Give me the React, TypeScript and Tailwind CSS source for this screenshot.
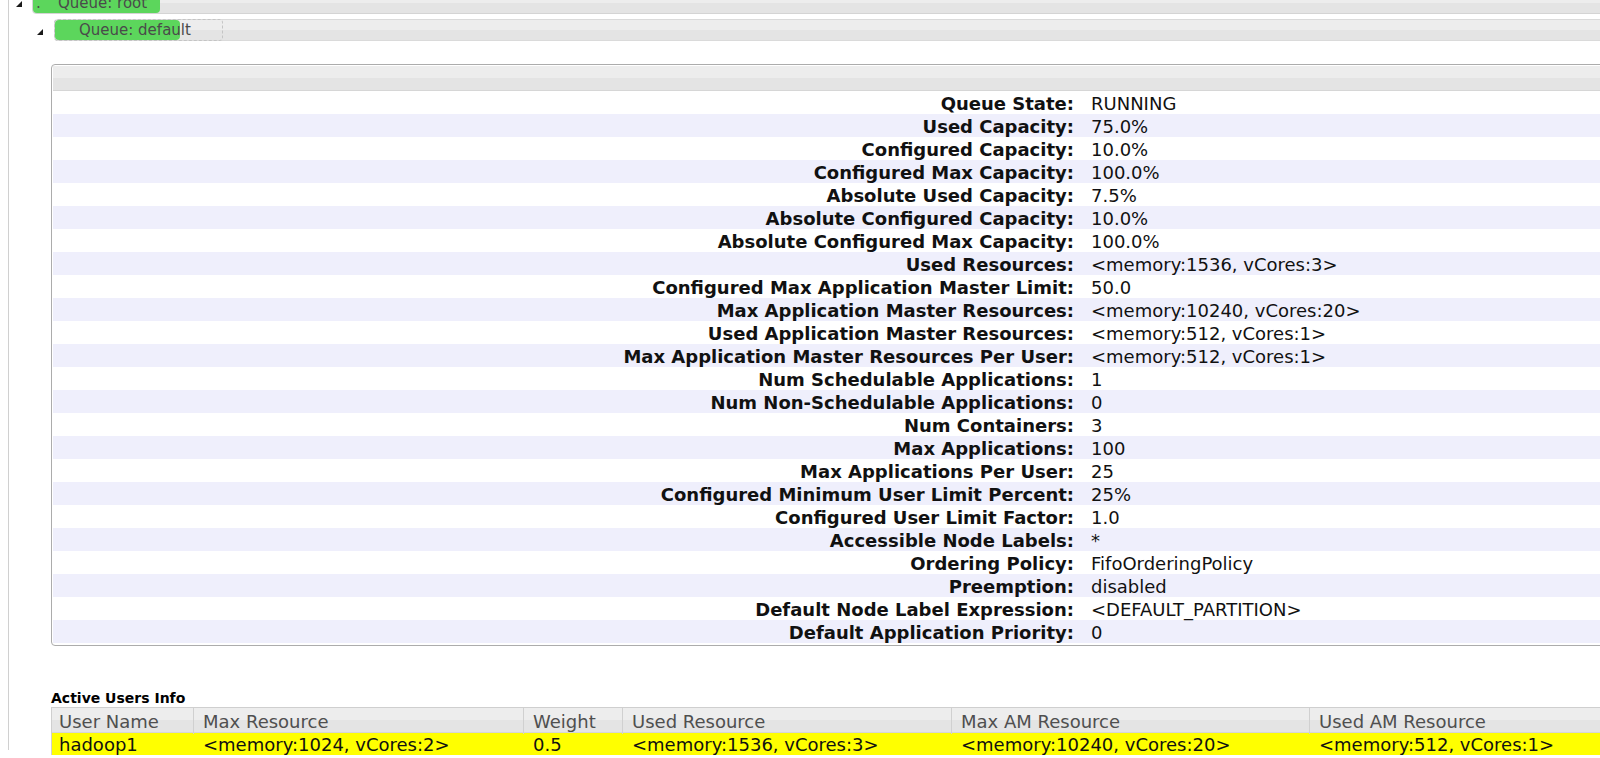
const queueInfo: [string, string][] = [
  ['Queue State:', 'RUNNING'],
  ['Used Capacity:', '75.0%'],
  ['Configured Capacity:', '10.0%'],
  ['Configured Max Capacity:', '100.0%'],
  ['Absolute Used Capacity:', '7.5%'],
  ['Absolute Configured Capacity:', '10.0%'],
  ['Absolute Configured Max Capacity:', '100.0%'],
  ['Used Resources:', '<memory:1536, vCores:3>'],
  ['Configured Max Application Master Limit:', '50.0'],
  ['Max Application Master Resources:', '<memory:10240, vCores:20>'],
  ['Used Application Master Resources:', '<memory:512, vCores:1>'],
  ['Max Application Master Resources Per User:', '<memory:512, vCores:1>'],
  ['Num Schedulable Applications:', '1'],
  ['Num Non-Schedulable Applications:', '0'],
  ['Num Containers:', '3'],
  ['Max Applications:', '100'],
  ['Max Applications Per User:', '25'],
  ['Configured Minimum User Limit Percent:', '25%'],
  ['Configured User Limit Factor:', '1.0'],
  ['Accessible Node Labels:', '*'],
  ['Ordering Policy:', 'FifoOrderingPolicy'],
  ['Preemption:', 'disabled'],
  ['Default Node Label Expression:', '<DEFAULT_PARTITION>'],
  ['Default Application Priority:', '0'],
]

const userCols = ['User Name', 'Max Resource', 'Weight', 'Used Resource', 'Max AM Resource', 'Used AM Resource']
const userRow = ['hadoop1', '<memory:1024, vCores:2>', '0.5', '<memory:1536, vCores:3>', '<memory:10240, vCores:20>', '<memory:512, vCores:1>']

function Triangle() {
  return (
    <svg width="6" height="6" viewBox="0 0 6 6" className="block">
      <polygon points="6,0 6,6 0,6" fill="#1a1a1a" />
    </svg>
  )
}

const barBg = 'bg-[linear-gradient(to_bottom,#ededed_50%,#e4e4e4_50%)]'

export default function App() {
  return (
    <div className="h-[758px] overflow-hidden bg-white text-black font-['DejaVu_Sans',Verdana,sans-serif]">
      <div className="ml-[8px] h-full w-[1640px] border-l border-[#d0d0d0]">
        {/* root queue */}
        <div className="-mt-[8px] flex h-[22px] items-center">
          <div className="w-[23px] pl-[7px] pt-[2px]">
            <Triangle />
          </div>
          <div className={`relative h-[22px] flex-1 rounded-[4px] border border-[#d4d4d4] ${barBg}`}>
            <div className="absolute top-0 bottom-0 left-0 w-[127px] rounded-[4px] bg-[#5cd65c]" />
            <div className="relative flex h-full items-center text-[15px] text-[#4a4a4a]">
              <span className="w-[25px] pl-[3px]">.</span>
              <span>Queue: root</span>
            </div>
          </div>
        </div>

        {/* default queue */}
        <div className="mt-[5px] flex h-[22px] items-center pl-[22px]">
          <div className="w-[23px] pl-[6px] pt-[4px]">
            <Triangle />
          </div>
          <div className={`relative h-[22px] flex-1 rounded-[4px] border border-[#dadada] ${barBg}`}>
            <div className="absolute -top-px -bottom-px -left-px w-[169px] rounded-[4px] border border-dashed border-[#c4c4c4]" />
            <div className="absolute top-0 bottom-0 left-0 w-[125px] rounded-[4px] bg-[#5cd65c]" />
            <div className="relative flex h-full items-center pl-[24px] text-[15px] text-[#4a4a4a]">Queue: default</div>
          </div>
        </div>

        {/* queue info panel */}
        <div className="ml-[42px] mt-[23px] w-[1570px] rounded-[4px] border border-[#acacac] pt-px pl-px pb-[2px]">
          <div className={`h-[25px] border-b border-[#d6d6d6] ${barBg}`} />
          <div className="text-[18px]">
            {queueInfo.map(([label, value], i) => (
              <div
                key={label}
                className={`grid h-[23px] grid-cols-[1021px_1fr] leading-[25px] ${i % 2 === 1 ? 'bg-[#efeffc]' : 'bg-white'}`}
              >
                <div className="text-right font-bold whitespace-nowrap text-[#111]">{label}</div>
                <div className="pl-[17px] whitespace-nowrap text-[#111]">{value}</div>
              </div>
            ))}
          </div>
        </div>

        {/* active users */}
        <div className="ml-[42px] mt-[44px] h-[17px] text-[14px] leading-[17px] font-bold">Active Users Info</div>
        <div className="ml-[42px] w-[1570px] border-t border-l border-[#cfcfcf] text-[18px]">
          <div className={`grid h-[25px] grid-cols-[141px_330px_99px_329px_358px_1fr] border-b border-[#d6d6d6] ${barBg}`}>
            {userCols.map((c, i) => (
              <div
                key={c}
                className={`pt-[2px] leading-[24px] whitespace-nowrap text-[#4f4f4f] ${i === 0 ? 'pl-[7px]' : 'border-l border-[#d0d0d0] pl-[9px]'}`}
              >
                {c}
              </div>
            ))}
          </div>
          <div className="grid h-[22px] grid-cols-[141px_330px_99px_329px_358px_1fr] bg-[#ffff00]">
            {userRow.map((v, i) => (
              <div key={i} className={`leading-[23px] whitespace-nowrap text-[#111] ${i === 0 ? 'pl-[7px]' : 'pl-[10px]'}`}>
                {v}
              </div>
            ))}
          </div>
        </div>
      </div>
    </div>
  )
}
